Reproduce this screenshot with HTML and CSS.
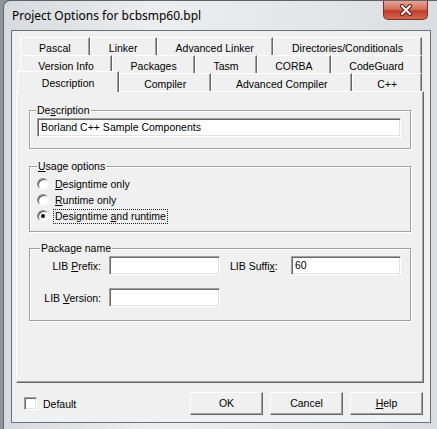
FILE: index.html
```html
<!DOCTYPE html>
<html lang="en">
<head>
  <meta charset="UTF-8" />
  <title>Project Options for bcbsmp60.bpl</title>
  <link rel="stylesheet" href="styles.css">
</head>
<body>

  <div class="window">
    <div class="titlebar">
      <span class="title">Project Options for bcbsmp60.bpl</span>
      <span class="close">
        <svg width="14" height="12" viewBox="0 0 14 12">
          <path d="M3 2 L11 10 M11 2 L3 10" stroke="#5a1f18" stroke-width="4" stroke-linecap="round"/>
          <path d="M3 2 L11 10 M11 2 L3 10" stroke="#fff" stroke-width="2" stroke-linecap="round"/>
        </svg>
      </span>
    </div>

    <div class="client">
      <div class="tabs">
        <div class="tab-row">
          <span class="tab">Pascal</span>
          <span class="tab">Linker</span>
          <span class="tab">Advanced Linker</span>
          <span class="tab">Directories/Conditionals</span>
        </div>
        <div class="tab-row">
          <span class="tab">Version Info</span>
          <span class="tab">Packages</span>
          <span class="tab">Tasm</span>
          <span class="tab">CORBA</span>
          <span class="tab">CodeGuard</span>
        </div>
        <div class="tab-row front">
          <span class="tab selected">Description</span>
          <span class="tab">Compiler</span>
          <span class="tab">Advanced Compiler</span>
          <span class="tab">C++</span>
        </div>
      </div>

      <div class="page">
        <div class="group desc">
          <span class="legend">De<u>s</u>cription</span>
          <div class="edit wide">Borland C++ Sample Components</div>
        </div>

        <div class="group usage">
          <span class="legend"><u>U</u>sage options</span>
          <div class="radio"><span class="dot"></span><span><u>D</u>esigntime only</span></div>
          <div class="radio"><span class="dot"></span><span><u>R</u>untime only</span></div>
          <div class="radio"><span class="dot on"></span><span class="focus">Designtime <u>a</u>nd runtime</span></div>
        </div>

        <div class="group package">
          <span class="legend">Package name</span>
          <div class="fields">
            <span class="lbl right">LIB <u>P</u>refix:</span>
            <div class="edit"></div>
            <span class="lbl">LIB Suffi<u>x</u>:</span>
            <div class="edit">60</div>
            <span class="lbl right">LIB <u>V</u>ersion:</span>
            <div class="edit"></div>
          </div>
        </div>
      </div>

      <div class="footer">
        <div class="check"><span class="box"></span>Default</div>
        <div class="buttons">
          <span class="btn">OK</span>
          <span class="btn">Cancel</span>
          <span class="btn"><u>H</u>elp</span>
        </div>
      </div>
    </div>
  </div>

</body>
</html>
```

FILE: styles.css
```css
* {
  box-sizing: border-box;
}
body {
  margin: 0;
  width: 437px;
  height: 429px;
  overflow: hidden;
  background: #8c949c;
  font-family: "Liberation Sans", Arial, sans-serif;
  font-size: 10.5px;
  color: #000;
}
u {
  text-decoration: underline;
  text-underline-offset: 1px;
}
.window {
  margin-left: 3px;
  height: 429px;
  border-left: 1px solid #5f6368;
  border-top: 1px solid #5f6368;
  border-top-left-radius: 7px;
  background: linear-gradient(to right, #d6dade, #eceef0 35%, #e4e7ea 70%, #d9dde1);
}
.titlebar {
  display: flex;
  align-items: flex-start;
  height: 29px;
}
.title {
  font-family: "Noto Sans", sans-serif;
  font-size: 12px;
  line-height: 16px;
  padding: 7px 0 0 8px;
}
.close {
  margin-left: auto;
  margin-right: 9px;
  width: 45px;
  height: 19px;
  display: flex;
  align-items: center;
  justify-content: center;
  border: 1px solid #7b3026;
  border-top: none;
  border-radius: 0 0 5px 5px;
  background: linear-gradient(#e7a396, #d4705e 45%, #bf3f2c 55%, #d2664f);
}
.client {
  margin-left: 7px;
  width: 420px;
  height: 393px;
  border: 1px solid #6d7075;
  background: #f0f0f0;
  padding: 6px 6px 0 4px;
}
.tab-row {
  display: flex;
  height: 18px;
  margin: 0 2px 0 4px;
}
.tab-row.front {
  margin-left: 1px;
}
.tab {
  flex: 1 1 auto;
  height: 18px;
  padding-top: 3px;
  line-height: 14px;
  text-align: center;
  white-space: nowrap;
  border-left: 1px solid #fff;
  border-top: 1px solid #fff;
  border-right: 1px solid #696969;
  box-shadow: inset -1px 0 #a0a0a0;
}
.tab.selected {
  position: relative;
  z-index: 2;
  height: 21px;
  margin-top: -2px;
  padding-top: 4px;
  background: #f0f0f0;
}
.page {
  height: 292px;
  border: 1px solid;
  border-color: #fff #696969 #696969 #fff;
  box-shadow: inset -1px -1px #a0a0a0;
  padding: 18px 12px 0 12px;
}
.group {
  position: relative;
  border: 1px solid #a0a0a0;
  box-shadow: inset 1px 1px #fff, 1px 1px #fff;
}
.legend {
  position: absolute;
  top: -7px;
  left: 6px;
  padding: 0 1px;
  line-height: 13px;
  background: #f0f0f0;
}
.desc {
  padding: 7px 0 11px 7px;
}
.usage {
  margin-top: 17px;
  padding: 9px 0 7px 7px;
}
.usage .legend {
  left: 7px;
}
.package {
  margin-top: 16px;
  padding: 7px 0 13px 0;
}
.package .legend {
  left: 10px;
}
.edit {
  height: 19px;
  background: #fff;
  border: 1px solid;
  border-color: #a0a0a0 #fff #fff #a0a0a0;
  box-shadow: inset 1px 1px #696969, inset -1px -1px #e3e3e3;
  padding-left: 3px;
  line-height: 17px;
}
.edit.wide {
  width: 364px;
}
.radio {
  display: flex;
  align-items: center;
  gap: 6px;
  height: 16px;
}
.dot {
  width: 12px;
  height: 12px;
  border-radius: 50%;
  border: 1px solid;
  border-color: #8f8f8f #f8f8f8 #f8f8f8 #8f8f8f;
  background: #fff;
  box-shadow: inset 1px 1px 0 #555;
  display: flex;
  align-items: center;
  justify-content: center;
}
.dot.on::after {
  content: "";
  width: 4px;
  height: 4px;
  border-radius: 50%;
  background: #000;
}
.focus {
  margin-left: -2px;
  padding: 0 1px;
  line-height: 13px;
  border: 1px dotted #222;
}
.fields {
  display: grid;
  grid-template-columns: 71px 111px 53px 112px;
  column-gap: 8px;
  row-gap: 13px;
  align-items: center;
}
.fields .edit:nth-child(4) {
  margin-left: 2px;
}
.lbl.right {
  text-align: right;
}
.fields .lbl:nth-child(3) {
  padding-left: 2px;
}
.footer {
  display: flex;
  align-items: center;
  height: 23px;
  margin-top: 9px;
  padding: 0 1px 0 8px;
}
.check {
  display: flex;
  align-items: center;
  gap: 6px;
}
.box {
  width: 13px;
  height: 13px;
  background: #fff;
  border: 1px solid;
  border-color: #a0a0a0 #fff #fff #a0a0a0;
  box-shadow: inset 1px 1px #696969, inset -1px -1px #e3e3e3;
}
.buttons {
  display: flex;
  gap: 7px;
  margin-left: auto;
}
.btn {
  width: 73px;
  height: 23px;
  line-height: 21px;
  text-align: center;
  border: 1px solid;
  border-color: #fff #696969 #696969 #fff;
  box-shadow: inset -1px -1px #a0a0a0;
  background: #f0f0f0;
}
```
